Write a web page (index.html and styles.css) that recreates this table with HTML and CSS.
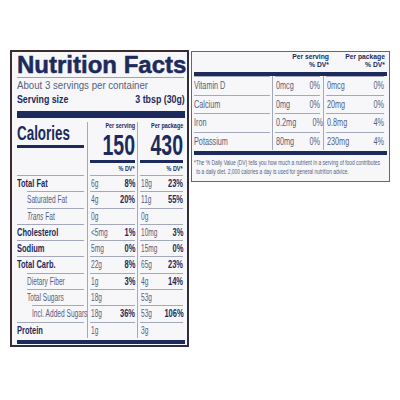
FILE: index.html
```html
<!DOCTYPE html>
<html lang="en">
<head>
    <meta charset="UTF-8">
    <title>Nutrition Facts</title>
    <meta name="viewport" content="width=device-width, initial-scale=1.0">
    <link rel="stylesheet" href="styles.css">
</head>
<body>

    <div class="page">

        <!-- main label -->
        <section class="label">
            <h1 class="title">Nutrition Facts</h1>
            <p class="servings">About 3 servings per container</p>
            <p class="serving-size"><span>Serving size</span><span>3 tbsp (30g)</span></p>
            <div class="bar bar-top"></div>

            <div class="facts">
                <div class="row row-cal">
                    <div class="cell"><div class="in cal-name"><span>Calories</span></div></div>
                    <div class="cell"><div class="in cal-num"><span class="head">Per serving</span><span class="big">150</span></div></div>
                    <div class="cell"><div class="in cal-num"><span class="head">Per package</span><span class="big">430</span></div></div>
                </div>
                <div class="row row-dv">
                    <div class="cell"><div class="in"></div></div>
                    <div class="cell"><div class="in dv"><span>% DV*</span></div></div>
                    <div class="cell"><div class="in dv"><span>% DV*</span></div></div>
                </div>
                <div class="row">
                    <div class="cell"><div class="in"><b>Total Fat</b></div></div>
                    <div class="cell"><div class="in"><span>6g</span><b>8%</b></div></div>
                    <div class="cell"><div class="in"><span>18g</span><b>23%</b></div></div>
                </div>
                <div class="row">
                    <div class="cell"><div class="in sub"><span>Saturated Fat</span></div></div>
                    <div class="cell"><div class="in"><span>4g</span><b>20%</b></div></div>
                    <div class="cell"><div class="in"><span>11g</span><b>55%</b></div></div>
                </div>
                <div class="row">
                    <div class="cell"><div class="in sub"><span><i>Trans</i> Fat</span></div></div>
                    <div class="cell"><div class="in"><span>0g</span></div></div>
                    <div class="cell"><div class="in"><span>0g</span></div></div>
                </div>
                <div class="row">
                    <div class="cell"><div class="in"><b>Cholesterol</b></div></div>
                    <div class="cell"><div class="in"><span>&lt;5mg</span><b>1%</b></div></div>
                    <div class="cell"><div class="in"><span>10mg</span><b>3%</b></div></div>
                </div>
                <div class="row">
                    <div class="cell"><div class="in"><b>Sodium</b></div></div>
                    <div class="cell"><div class="in"><span>5mg</span><b>0%</b></div></div>
                    <div class="cell"><div class="in"><span>15mg</span><b>0%</b></div></div>
                </div>
                <div class="row">
                    <div class="cell"><div class="in"><b>Total Carb.</b></div></div>
                    <div class="cell"><div class="in"><span>22g</span><b>8%</b></div></div>
                    <div class="cell"><div class="in"><span>65g</span><b>23%</b></div></div>
                </div>
                <div class="row">
                    <div class="cell"><div class="in sub"><span>Dietary Fiber</span></div></div>
                    <div class="cell"><div class="in"><span>1g</span><b>3%</b></div></div>
                    <div class="cell"><div class="in"><span>4g</span><b>14%</b></div></div>
                </div>
                <div class="row">
                    <div class="cell"><div class="in sub"><span>Total Sugars</span></div></div>
                    <div class="cell"><div class="in"><span>18g</span></div></div>
                    <div class="cell"><div class="in"><span>53g</span></div></div>
                </div>
                <div class="row">
                    <div class="cell"><div class="in sub2"><span>Incl. Added Sugars</span></div></div>
                    <div class="cell"><div class="in"><span>18g</span><b>36%</b></div></div>
                    <div class="cell"><div class="in"><span>53g</span><b>106%</b></div></div>
                </div>
                <div class="row">
                    <div class="cell"><div class="in"><b>Protein</b></div></div>
                    <div class="cell"><div class="in"><span>1g</span></div></div>
                    <div class="cell"><div class="in"><span>3g</span></div></div>
                </div>
            </div>

            <div class="bar bar-bottom"></div>
        </section>

        <!-- vitamins and minerals -->
        <section class="minerals">
            <div class="min-head">
                <div>Per serving<br>% DV*</div>
                <div>Per package<br>% DV*</div>
            </div>
            <div class="bar bar-min"></div>

            <div class="min-row">
                <div class="cell"><div class="in"><span>Vitamin D</span></div></div>
                <div class="cell"><div class="in"><span>0mcg</span><span>0%</span></div></div>
                <div class="cell"><div class="in"><span>0mcg</span><span>0%</span></div></div>
            </div>
            <div class="min-row">
                <div class="cell"><div class="in"><span>Calcium</span></div></div>
                <div class="cell"><div class="in"><span>0mg</span><span>0%</span></div></div>
                <div class="cell"><div class="in"><span>20mg</span><span>0%</span></div></div>
            </div>
            <div class="min-row">
                <div class="cell"><div class="in"><span>Iron</span></div></div>
                <div class="cell"><div class="in"><span>0.2mg</span><span>0%</span></div></div>
                <div class="cell"><div class="in"><span>0.8mg</span><span>4%</span></div></div>
            </div>
            <div class="min-row">
                <div class="cell"><div class="in"><span>Potassium</span></div></div>
                <div class="cell"><div class="in"><span>80mg</span><span>0%</span></div></div>
                <div class="cell"><div class="in"><span>230mg</span><span>4%</span></div></div>
            </div>

            <div class="bar bar-min2"></div>
            <p class="footnote">*The % Daily Value (DV) tells you how much a nutrient in a serving of food contributes<br>to a daily diet. 2,000 calories a day is used for general nutrition advice.</p>
        </section>

    </div>

</body>
</html>
```

FILE: styles.css
```css
* {
    box-sizing: border-box;
    margin: 0;
    padding: 0;
}
body {
    font-family: "Liberation Sans", Arial, sans-serif;
    background-color: #fff;
    color: #56607c;
}
.page {
    display: flex;
    align-items: flex-start;
    padding: 50px 0 0 10px;
}

/* main label */
.label {
    width: 179px;
    background: #f7f7f9;
    border: 2px solid #2f2c44;
    border-top-color: #3e2b2e;
    border-left-color: #3e2b2e;
    padding: 1px 2px 1px 5px;
}
.title {
    font-size: 24px;
    line-height: 24px;
    font-weight: 700;
    color: #1c2b5c;
    -webkit-text-stroke: 0.5px #1c2b5c;
    white-space: nowrap;
    border-bottom: 1px solid #9aa1b6;
    margin-right: 1px;
}
/* the label face is a condensed one, so the text gets squeezed */
.servings {
    font-size: 11.5px;
    line-height: 14px;
    white-space: nowrap;
    transform: scaleX(.84);
    transform-origin: left center;
}
.serving-size {
    display: flex;
    justify-content: space-between;
    font-size: 11px;
    line-height: 15px;
    font-weight: 700;
    color: #1c2b5c;
    white-space: nowrap;
}
.serving-size span {
    display: inline-block;
    transform: scaleX(.8);
    transform-origin: left center;
}
.serving-size span:last-child {
    transform-origin: right center;
}
.bar {
    background: #1c2b5c;
}
.bar-top {
    height: 7px;
    margin-top: 4px;
}
.bar-bottom {
    height: 4px;
    margin-top: 2px;
}

.facts {
    margin-top: 4px;
}
.row {
    display: grid;
    grid-template-columns: 70px 50px 48px;
}
.cell + .cell {
    border-left: 1px solid #a3a9bb;
}
.in {
    display: flex;
    justify-content: space-between;
    align-items: center;
    height: 16.3px;
    border-top: 1px solid #a3a9bb;
    font-size: 10px;
    line-height: 15.3px;
    margin-right: 3px;
    white-space: nowrap;
}
.cell + .cell .in {
    margin: 0 2px 0 2px;
    padding-left: 1px;
}
.in span,
.in b {
    display: inline-block;
    transform: scaleX(.66);
    transform-origin: left center;
}
.in b {
    color: #1c2b5c;
    transform: scaleX(.75);
}
.cell + .cell .in > :last-child:not(:first-child) {
    transform-origin: right center;
}
.sub {
    margin-left: 10px;
}
.sub2 {
    margin-left: 15px;
}

/* calories block */
.row-cal .in {
    height: auto;
    border-top: none;
    border-bottom: 3px solid #1c2b5c;
    padding-bottom: 1px;
}
.cal-name {
    align-self: stretch;
    align-items: flex-end;
    font-size: 20px;
    line-height: 22px;
    font-weight: 700;
    color: #1c2b5c;
}
.in.cal-name span {
    transform: scaleX(.67);
}
.cal-num {
    flex-direction: column;
    align-items: flex-end;
    color: #1c2b5c;
    font-weight: 700;
}
.in.cal-num span {
    transform-origin: right center;
}
.in .head {
    font-size: 7px;
    line-height: 8px;
    transform: scaleX(.78);
}
.in .big {
    font-size: 30px;
    line-height: 29px;
    transform: scaleX(.65);
}
.row-dv .in {
    height: 12px;
    border-top: none;
    justify-content: flex-end;
}
.in.dv span {
    font-size: 7px;
    line-height: 12px;
    font-weight: 700;
    color: #1c2b5c;
    transform: scaleX(.78);
    transform-origin: right center;
}

/* vitamins and minerals */
.minerals {
    width: 199px;
    margin-left: 2px;
    margin-top: 1px;
    background: #f7f7f9;
    border: 1px solid #5d6684;
    padding: 0 2px 5px 2px;
}
.min-head {
    display: grid;
    grid-template-columns: 1fr 56px;
    padding: 1px 2px 0 0;
    text-align: right;
    font-size: 7.5px;
    line-height: 8px;
    font-weight: 700;
    color: #1c2b5c;
    white-space: nowrap;
}
.min-head div {
    transform: scaleX(.9);
    transform-origin: right center;
}
.bar-min {
    height: 4px;
    margin-top: 3px;
}
.bar-min2 {
    height: 4px;
    margin-top: 1px;
}
.min-row {
    display: grid;
    grid-template-columns: 78px 51px 64px;
}
.min-row .in {
    height: 18.5px;
    font-size: 11px;
    line-height: 17.5px;
    margin-right: 2px;
}
.min-row .cell + .cell .in {
    margin: 0 3px 0 2px;
    padding-left: 1px;
}
.min-row:first-of-type .in {
    border-top-color: transparent;
}
.footnote {
    font-size: 6.8px;
    line-height: 9px;
    padding: 3px 0 0 3px;
    text-indent: -3px;
    white-space: nowrap;
    transform: scaleX(.72);
    transform-origin: left center;
}
```
